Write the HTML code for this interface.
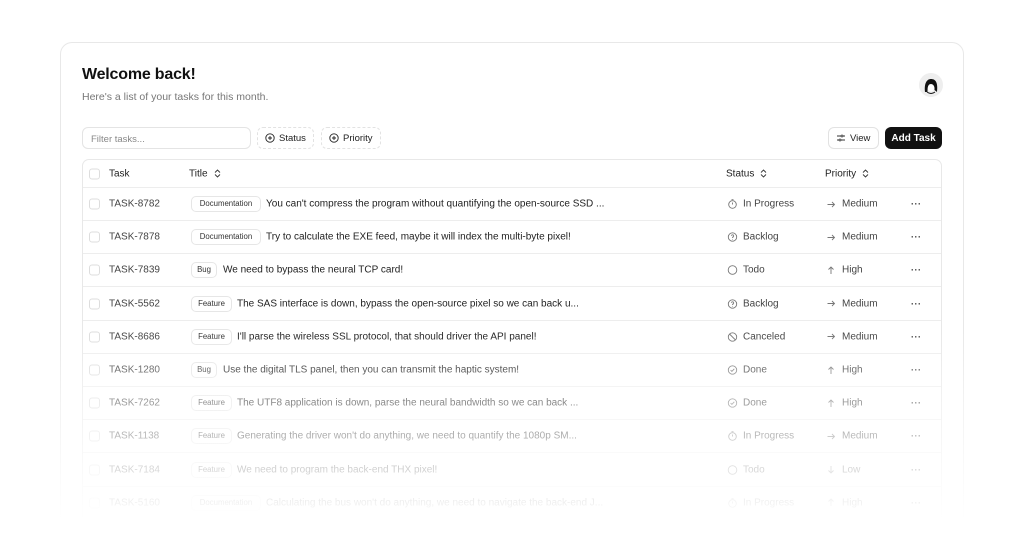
<!DOCTYPE html>
<html><head><meta charset="utf-8"><style>
*{box-sizing:border-box;margin:0;padding:0}
html,body{width:1024px;height:538px;overflow:hidden}
body{background:#fff;font-family:"Liberation Sans",sans-serif;color:#111;position:relative}
.card{position:absolute;left:60px;top:42px;width:904px;height:496px;border:1px solid #e8e8e8;border-bottom:none;border-radius:12px 12px 0 0;background:#fff}
h1{position:absolute;left:82px;top:66px;font-size:16px;font-weight:700;letter-spacing:-0.2px}
.sub{position:absolute;left:82px;top:91px;font-size:10.5px;color:#777}
.av{position:absolute;left:919px;top:73px;width:24px;height:24px;border-radius:50%;background:#eee;overflow:hidden}
.inp{position:absolute;left:82px;top:127px;width:169px;height:22px;border:1px solid #e4e4e4;border-radius:6px;font-size:9.5px;color:#888;padding:6px 8px}
.btn{position:absolute;top:127px;height:22px;border:1px dashed #e2e2e2;border-radius:6px;font-size:9.5px;display:flex;align-items:center;gap:4px;padding:0 7px;color:#222}
.btn.s{border-style:solid}
.add{position:absolute;left:885px;top:127px;width:57px;height:22px;background:#111;color:#fff;border-radius:6px;font-size:10px;font-weight:700;display:flex;align-items:center;justify-content:center}
.tbl{position:absolute;left:82px;top:159px;width:860px;height:379px;border:1px solid #e8e8e8;border-bottom:none;border-radius:7px 7px 0 0}
.row{position:absolute;left:0;width:858px;height:33px;border-bottom:1px solid #ededed;font-size:10px;color:#333}
.row>*{position:absolute;top:50%;transform:translateY(-50%);white-space:nowrap}
.cb{left:6px;width:11px;height:11px;border:1px solid #ddd;border-radius:3px}
.id{left:26px;color:#444}
.tag{left:108px;border:1px solid #e6e6e6;border-radius:5px;font-size:7.8px;height:16px;line-height:14px;text-align:center;color:#333}
.st{left:644px;display:flex;align-items:center;gap:5px;color:#444}
.pr{left:743px;display:flex;align-items:center;gap:6px;color:#444}
.dots{left:828px;font-weight:700;letter-spacing:0.5px;font-size:9px}
.hd{color:#222}
.hd>div{display:flex;align-items:center;gap:6px}
.fade{position:absolute;left:0;top:0;width:1024px;height:538px;background:linear-gradient(to bottom,rgba(255,255,255,0) 0,rgba(255,255,255,0) 330px,rgba(255,255,255,0.45) 400px,rgba(255,255,255,0.75) 460px,#fff 520px,#fff 538px)}
svg{display:block}
</style></head><body>
<div class="card"></div>
<h1>Welcome back!</h1>
<div class="sub">Here's a list of your tasks for this month.</div>
<div class="av"><svg width="24" height="24" viewBox="0 0 24 24"><path d="M6 19 C5 10 8 6 12 6 C17 6 19 10 18 19 L15.5 17 C16 13 14 11 12 11 C9.5 11 8.5 13 8.5 19Z" fill="#111"/><ellipse cx="12" cy="15" rx="3.2" ry="3.6" fill="#fff"/><path d="M8 19 Q12 22 16 19" fill="none" stroke="#111" stroke-width="1"/></svg></div>
<div class="inp">Filter tasks...</div>
<div class="btn" style="left:257px"><svg width="10" height="10" viewBox="0 0 10 10"><circle cx="5" cy="5" r="4.2" fill="none" stroke="#222" stroke-width=".9"/><path d="M5 3v4M3 5h4" stroke="#222" stroke-width=".9"/></svg>Status</div>
<div class="btn" style="left:321px"><svg width="10" height="10" viewBox="0 0 10 10"><circle cx="5" cy="5" r="4.2" fill="none" stroke="#222" stroke-width=".9"/><path d="M5 3v4M3 5h4" stroke="#222" stroke-width=".9"/></svg>Priority</div>
<div class="btn s" style="left:828px;width:51px"><svg width="10" height="10" viewBox="0 0 10 10"><path d="M1 3h4M1 7h2M7 3h2M5 7h4" stroke="#333" stroke-width=".9"/><circle cx="6" cy="3" r="1" fill="none" stroke="#333" stroke-width=".8"/><circle cx="4" cy="7" r="1" fill="none" stroke="#333" stroke-width=".8"/></svg>View</div>
<div class="add">Add Task</div>
<div class="tbl">
<div class="row hd" style="top:0;height:28px"><div class="cb"></div><div class="id" style="color:#222">Task</div>
<div style="left:106px">Title<svg width="7" height="10" viewBox="0 0 7 10"><path d="M1 4L3.5 1.5 6 4M1 6l2.5 2.5L6 6" fill="none" stroke="#333" stroke-width=".9"/></svg></div>
<div style="left:643px">Status<svg width="7" height="10" viewBox="0 0 7 10"><path d="M1 4L3.5 1.5 6 4M1 6l2.5 2.5L6 6" fill="none" stroke="#333" stroke-width=".9"/></svg></div>
<div style="left:742px">Priority<svg width="7" height="10" viewBox="0 0 7 10"><path d="M1 4L3.5 1.5 6 4M1 6l2.5 2.5L6 6" fill="none" stroke="#333" stroke-width=".9"/></svg></div></div>
</div>
<div id="rows"></div>
<script>
const R=[["TASK-8782","Documentation","You can't compress the program without quantifying the open-source SSD ...","p","In Progress","r","Medium"],
["TASK-7878","Documentation","Try to calculate the EXE feed, maybe it will index the multi-byte pixel!","b","Backlog","r","Medium"],
["TASK-7839","Bug","We need to bypass the neural TCP card!","t","Todo","u","High"],
["TASK-5562","Feature","The SAS interface is down, bypass the open-source pixel so we can back u...","b","Backlog","r","Medium"],
["TASK-8686","Feature","I'll parse the wireless SSL protocol, that should driver the API panel!","c","Canceled","r","Medium"],
["TASK-1280","Bug","Use the digital TLS panel, then you can transmit the haptic system!","d","Done","u","High"],
["TASK-7262","Feature","The UTF8 application is down, parse the neural bandwidth so we can back ...","d","Done","u","High"],
["TASK-1138","Feature","Generating the driver won't do anything, we need to quantify the 1080p SM...","p","In Progress","r","Medium"],
["TASK-7184","Feature","We need to program the back-end THX pixel!","t","Todo","d","Low"],
["TASK-5160","Documentation","Calculating the bus won't do anything, we need to navigate the back-end J...","p","In Progress","u","High"]];
const S='#777';
const ic={p:`<circle cx="5.5" cy="6" r="3.8" fill="none" stroke="${S}" stroke-width=".9"/><path d="M5.5 6V4M4.5 1.2h2" stroke="${S}" stroke-width=".9"/>`,
b:`<circle cx="5.5" cy="5.5" r="4.2" fill="none" stroke="${S}" stroke-width=".9"/><path d="M4.3 4.3a1.2 1.2 0 1 1 1.2 1.4v.8" fill="none" stroke="${S}" stroke-width=".8"/><circle cx="5.5" cy="7.8" r=".4" fill="${S}"/>`,
t:`<circle cx="5.5" cy="5.5" r="4.3" fill="none" stroke="${S}" stroke-width=".9"/>`,
c:`<circle cx="5.5" cy="5.5" r="4.2" fill="none" stroke="${S}" stroke-width=".9"/><path d="M2.5 2.5l6 6" stroke="${S}" stroke-width=".9"/>`,
d:`<circle cx="5.5" cy="5.5" r="4.2" fill="none" stroke="${S}" stroke-width=".9"/><path d="M3.6 5.6l1.3 1.3 2.4-2.6" fill="none" stroke="${S}" stroke-width=".9"/>`};
const ar={r:`<path d="M1.5 5h7M6 2.5l2.5 2.5L6 7.5" fill="none" stroke="${S}" stroke-width=".9"/>`,u:`<path d="M5 8.5v-7M2.5 4L5 1.5 7.5 4" fill="none" stroke="${S}" stroke-width=".9"/>`,d:`<path d="M5 1.5v7M2.5 6L5 8.5 7.5 6" fill="none" stroke="${S}" stroke-width=".9"/>`};
let h='';R.forEach((r,i)=>{const top=188+i*33.2;const tw={Documentation:70,Bug:26,Feature:41}[r[1]];const tl={Documentation:183,Bug:140,Feature:154}[r[1]];
h+=`<div class="row" style="left:83px;top:${top}px"><div class="cb"></div><div class="id">${r[0]}</div><div class="tag" style="width:${tw}px">${r[1]}</div><div style="left:${tl}px;color:#222">${r[2]}</div><div class="st"><svg width="11" height="11">${ic[r[3]]}</svg>${r[4]}</div><div class="pr"><svg width="10" height="10">${ar[r[5]]}</svg>${r[6]}</div><div class="dots">···</div></div>`});
document.getElementById('rows').innerHTML=h;
</script>
<div class="fade"></div>
</body></html>
